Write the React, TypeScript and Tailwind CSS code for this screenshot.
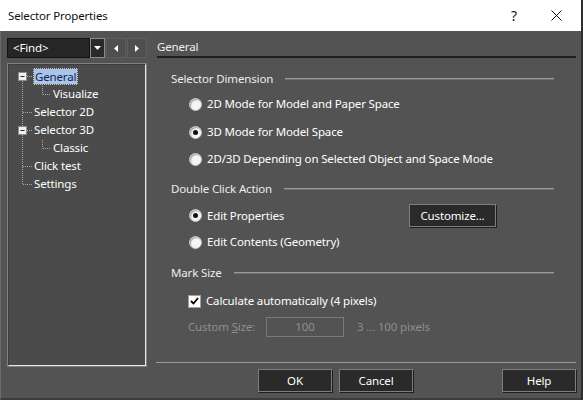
import React from "react";

function Radio({ checked }: { checked?: boolean }) {
  return (
    <span className="w-[13px] h-[13px] rounded-full bg-[#f4f4f4] border border-[#c4c4c4] shadow-[inset_1px_1px_1px_#a0a0a0] flex items-center justify-center shrink-0">
      {checked && <span className="w-[5px] h-[5px] rounded-full bg-[#111]" />}
    </span>
  );
}

function SectionHeader({ label }: { label: string }) {
  return (
    <div className="h-[16px] flex items-center pl-[14px] mr-[22px]">
      <span className="text-[#ececec]">{label}</span>
      <div className="flex-1 ml-[12px] h-[2px] bg-[#9a9a9a] border-b border-[#707070]" />
    </div>
  );
}

function Btn({ label, w }: { label: string; w: string }) {
  return (
    <div
      className={`${w} h-[23px] bg-[#2a2a2a] border border-[#7e7e7e] shadow-[1px_1px_0_#1e1e1e] flex items-center justify-center text-white`}
    >
      {label}
    </div>
  );
}

function TreeLines() {
  return (
    <svg
      className="absolute left-0 top-0 pointer-events-none"
      width="140"
      height="140"
      viewBox="0 0 140 140"
    >
      <g stroke="#a8a8a8" strokeWidth="1" strokeDasharray="1 1" fill="none">
        <line x1="13.5" y1="16" x2="13.5" y2="61" />
        <line x1="13.5" y1="70" x2="13.5" y2="120" />
        <line x1="18" y1="11.5" x2="24" y2="11.5" />
        <line x1="14" y1="47.5" x2="24" y2="47.5" />
        <line x1="18" y1="65.5" x2="24" y2="65.5" />
        <line x1="14" y1="101.5" x2="24" y2="101.5" />
        <line x1="14" y1="119.5" x2="24" y2="119.5" />
        <line x1="33.5" y1="21" x2="33.5" y2="29.5" />
        <line x1="34" y1="29.5" x2="42" y2="29.5" />
        <line x1="33.5" y1="75" x2="33.5" y2="83.5" />
        <line x1="34" y1="83.5" x2="42" y2="83.5" />
      </g>
      <g>
        <rect x="9.5" y="7.5" width="8" height="8" fill="#f0f0f0" stroke="#8c8c8c" />
        <line x1="11.5" y1="11.5" x2="15.5" y2="11.5" stroke="#2a2a2a" />
        <rect x="9.5" y="61.5" width="8" height="8" fill="#f0f0f0" stroke="#8c8c8c" />
        <line x1="11.5" y1="65.5" x2="15.5" y2="65.5" stroke="#2a2a2a" />
      </g>
    </svg>
  );
}

export default function App() {
  return (
    <div className="w-[583px] h-[400px] bg-[#2e2e2e] flex overflow-hidden font-['Noto_Sans',sans-serif] text-[11.5px] tracking-[-0.15px] leading-[16px]">
      <div className="w-[581px] h-[400px] flex flex-col">
        {/* Title bar */}
        <div className="h-[31px] shrink-0 bg-white flex items-center pl-[8px] text-[#111]">
          <span>Selector Properties</span>
          <span className="ml-auto text-[14px] w-[12px] text-center mr-[31px]">?</span>
          <svg width="11" height="11" viewBox="0 0 11 11" className="mr-[19px]">
            <path d="M0.5 0.5 L10.5 10.5 M10.5 0.5 L0.5 10.5" stroke="#111" strokeWidth="1" />
          </svg>
        </div>
        {/* Body */}
        <div className="flex-1 bg-[#535353] flex border-l border-[#6a6a6a] border-b-2 border-b-[#3c3c3c]">
          {/* Left column */}
          <div className="w-[146px] shrink-0 pl-[6px] pt-[7px] flex flex-col">
            <div className="h-[20px] flex">
              <div className="w-[83px] h-[20px] bg-[#262626] border border-[#141414] flex items-center pl-[5px] text-white">
                &lt;Find&gt;
              </div>
              <div className="w-[15px] h-[20px] bg-[#2a2a2a] border border-[#8c8c8c] flex items-center justify-center">
                <svg width="7" height="4" viewBox="0 0 7 4">
                  <path d="M0 0 H7 L3.5 4 Z" fill="#fff" />
                </svg>
              </div>
              <div className="w-[20px] h-[20px] ml-px bg-[#4f4f4f] border border-[#5e5e5e] flex items-center justify-center">
                <svg width="4" height="7" viewBox="0 0 4 7">
                  <path d="M4 0 V7 L0 3.5 Z" fill="#fff" />
                </svg>
              </div>
              <div className="w-[20px] h-[20px] ml-px bg-[#4f4f4f] border border-[#5e5e5e] flex items-center justify-center">
                <svg width="4" height="7" viewBox="0 0 4 7">
                  <path d="M0 0 V7 L4 3.5 Z" fill="#fff" />
                </svg>
              </div>
            </div>
            <div className="mt-[5px] h-[304px] border border-[#808080]">
              <div className="h-full border border-t-[#3e3e3e] border-l-[#3e3e3e] border-r-[#e8e8e8] border-b-[#e8e8e8] bg-[#4b4b4b] relative pt-[2px] text-white">
                <TreeLines />
                <div className="h-[18px] flex items-center pl-[24px]">
                  <span className="bg-[#a9c6e8] text-[#142456] border border-dotted border-[#6a4a20] px-[1px] leading-[15px]">
                    General
                  </span>
                </div>
                <div className="h-[18px] flex items-center pl-[44px]">Visualize</div>
                <div className="h-[18px] flex items-center pl-[25px]">Selector 2D</div>
                <div className="h-[18px] flex items-center pl-[25px]">Selector 3D</div>
                <div className="h-[18px] flex items-center pl-[44px]">Classic</div>
                <div className="h-[18px] flex items-center pl-[25px]">Click test</div>
                <div className="h-[18px] flex items-center pl-[25px]">Settings</div>
              </div>
            </div>
          </div>
          {/* Right column */}
          <div className="flex-1 ml-[10px] pr-[5px] pt-[7px] flex flex-col text-white">
            <div className="h-[18px] flex items-center text-[#f0f0f0]">General</div>
            <div className="h-[2px] bg-[#1f1f1f]" />

            <div className="mt-[13px]">
              <SectionHeader label="Selector Dimension" />
            </div>
            <div className="mt-[9px] h-[16px] flex items-center pl-[32px] gap-[5px]">
              <Radio />
              <span>2D Mode for Model and Paper Space</span>
            </div>
            <div className="mt-[12px] h-[16px] flex items-center pl-[32px] gap-[5px]">
              <Radio checked />
              <span>3D Mode for Model Space</span>
            </div>
            <div className="mt-[11px] h-[16px] flex items-center pl-[32px] gap-[5px]">
              <Radio />
              <span>2D/3D Depending on Selected Object and Space Mode</span>
            </div>

            <div className="mt-[14px]">
              <SectionHeader label="Double Click Action" />
            </div>
            <div className="mt-[7px] h-[23px] flex items-center pl-[32px]">
              <div className="w-[220px] flex items-center gap-[5px]">
                <Radio checked />
                <span>Edit Properties</span>
              </div>
              <Btn label="Customize..." w="w-[87px]" />
            </div>
            <div className="mt-[7px] h-[16px] flex items-center pl-[32px] gap-[5px]">
              <Radio />
              <span>Edit Contents (Geometry)</span>
            </div>

            <div className="mt-[15px]">
              <SectionHeader label="Mark Size" />
            </div>
            <div className="mt-[12px] h-[16px] flex items-center pl-[31px] gap-[5px]">
              <span className="w-[13px] h-[13px] bg-white border border-[#a0a0a0] flex items-center justify-center shrink-0">
                <svg width="9" height="8" viewBox="0 0 9 8">
                  <path d="M1 4 L3.5 6.5 L8 1" stroke="#000" strokeWidth="1.8" fill="none" />
                </svg>
              </span>
              <span>Calculate automatically (4 pixels)</span>
            </div>
            <div className="mt-[8px] h-[20px] flex items-center pl-[31px] text-[#8e8e8e]">
              <span className="w-[78px]">
                Custom <span className="underline">S</span>ize:
              </span>
              <div className="w-[78px] h-[20px] border border-[#7a7a7a] flex items-center justify-center">
                100
              </div>
              <span className="ml-[13px]">3 ... 100 pixels</span>
            </div>

            <div className="mt-[25px] -ml-px h-px bg-[#9a9a9a]" />
            <div className="mt-[6px] flex pl-[101px]">
              <Btn label="OK" w="w-[74px]" />
              <div className="ml-[7px]">
                <Btn label="Cancel" w="w-[74px]" />
              </div>
              <div className="ml-auto">
                <Btn label="Help" w="w-[74px]" />
              </div>
            </div>
          </div>
        </div>
      </div>
    </div>
  );
}
